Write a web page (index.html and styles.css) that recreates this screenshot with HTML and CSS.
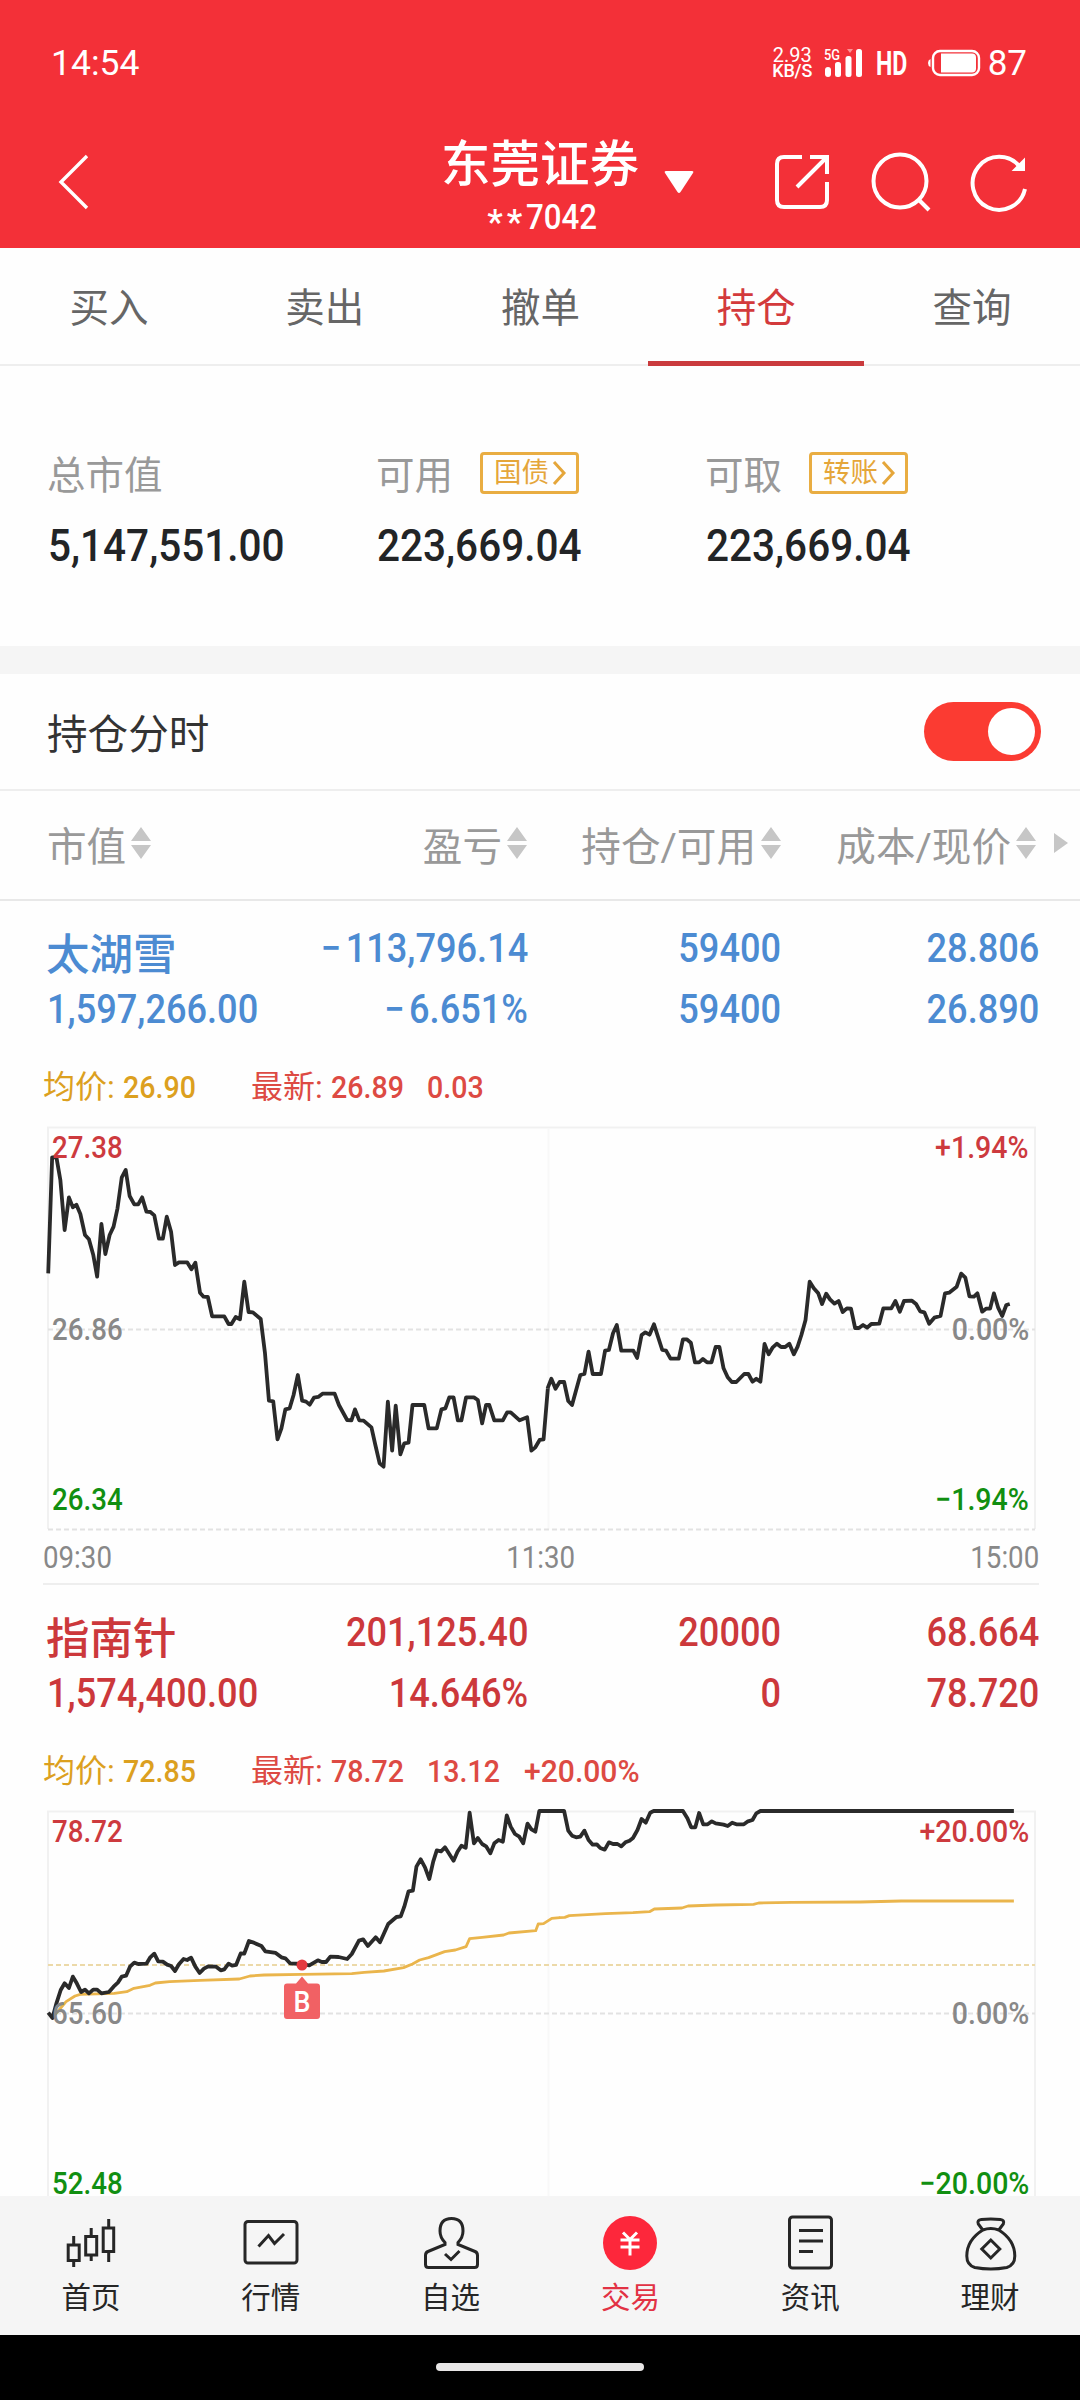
FILE: index.html
```html
<!DOCTYPE html>
<html lang="zh-CN">
<head>
<meta charset="utf-8">
<title>持仓</title>
<link rel="stylesheet" href="styles.css">
</head>
<body>
<div class="app">
  <header class="top">
    <div class="status">
      <span class="clock">14:54</span>
      <div class="speed"><span>2.93</span><span class="unit">KB/S</span></div>
      <svg class="signal" width="40" height="30" viewBox="0 0 40 30">
        <text x="0" y="11.5" font-size="14" font-weight="500" textLength="16" lengthAdjust="spacingAndGlyphs" fill="#fff">5G</text>
        <path d="M23 1h6l-3 4z" fill="#ff9296"/>
        <g fill="#fff"><rect x="1" y="19" width="6" height="10" rx="3"/><rect x="11" y="14" width="6" height="15" rx="2.5"/><rect x="21.500" y="8" width="6" height="21" rx="2.500"/><rect x="32" y="1" width="6" height="28" rx="2.500"/></g>
      </svg>
      <span class="hd"><span>HD</span></span>
      <svg class="battery" width="54" height="28" viewBox="0 0 54 28">
        <rect x="6" y="2" width="46" height="24" rx="7" fill="none" stroke="#fff" stroke-width="2.400"/>
        <path d="M14 4.500h31q4 0 4 4v11q0 4-4 4H14z" fill="#fff"/>
        <path d="M3.500 10v8Q1 17 1 14t2.500-4z" fill="#fff"/>
      </svg>
      <span class="level">87</span>
    </div>
    <div class="titlebar">
      <svg class="back" width="40" height="60" viewBox="0 0 40 60"><path d="M33 5 7 31 33 57" fill="none" stroke="#fff" stroke-width="3.400"/></svg>
      <div class="account">
        <div class="broker">东莞证券</div>
        <div class="acct-no"><span class="stars">**</span><span class="num">7042</span></div>
        <svg class="caret" width="32" height="24" viewBox="0 0 32 24"><path d="M3 1h26q2 0 1 2L17.500 22q-1.500 2-3 0L2 3Q1 1 3 1z" fill="#fff"/></svg>
      </div>
      <div class="actions">
        <svg width="60" height="60" viewBox="0 0 60 60" fill="none" stroke="#fff" stroke-width="4">
          <path d="M30 5H12Q5 5 5 12v36q0 7 7 7h36q7 0 7-7V30"/><path d="M38 5h17v17M54 6 25 35"/>
        </svg>
        <svg width="60" height="60" viewBox="0 0 60 60" fill="none" stroke="#fff" stroke-width="4">
          <circle cx="29" cy="29" r="26.500"/><path d="m47 47 11 11"/>
        </svg>
        <svg width="60" height="60" viewBox="0 0 60 60" fill="none" stroke="#fff" stroke-width="4">
          <path d="M55 37A26.500 26.500 0 1 1 50 15"/><path d="M54 8v10H44z" fill="#fff" stroke-width="2"/>
        </svg>
      </div>
    </div>
  </header>

  <nav class="tabs">
    <a>买入</a><a>卖出</a><a>撤单</a><a class="active">持仓</a><a>查询</a>
  </nav>

  <section class="summary">
    <div class="cell"><div class="label">总市值</div><div class="value"><span class="num">5,147,551.00</span></div></div>
    <div class="cell"><div class="label">可用<span class="tag">国债<svg width="15" height="26" viewBox="0 0 15 26"><path d="m2 2 10 11L2 24"/></svg></span></div><div class="value"><span class="num">223,669.04</span></div></div>
    <div class="cell"><div class="label">可取<span class="tag">转账<svg width="15" height="26" viewBox="0 0 15 26"><path d="m2 2 10 11L2 24"/></svg></span></div><div class="value"><span class="num">223,669.04</span></div></div>
  </section>

  <main class="holdings">
    <div class="switch-row"><span>持仓分时</span><span class="toggle"><i></i></span></div>
    <div class="thead">
      <span class="c1">市值<svg class="sort" viewBox="0 0 20 32"><path d="M10 0 20 14H0zM0 18h20L10 32z"/></svg></span>
      <span class="c2">盈亏<svg class="sort" viewBox="0 0 20 32"><path d="M10 0 20 14H0zM0 18h20L10 32z"/></svg></span>
      <span class="c3">持仓/可用<svg class="sort" viewBox="0 0 20 32"><path d="M10 0 20 14H0zM0 18h20L10 32z"/></svg></span>
      <span class="c4">成本/现价<svg class="sort" viewBox="0 0 20 32"><path d="M10 0 20 14H0zM0 18h20L10 32z"/></svg></span>
      <svg class="more" width="16" height="20" viewBox="0 0 16 20"><path d="m1 0 14 10L1 20z"/></svg>
    </div>

    <article class="stock">
      <div class="rows blue">
        <span class="name">太湖雪</span><span class="num neg">−113,796.14</span><span class="num">59400</span><span class="num">28.806</span>
        <span class="num left">1,597,266.00</span><span class="num neg">−6.651%</span><span class="num">59400</span><span class="num">26.890</span>
      </div>
      <div class="quote">
        <span class="avg">均价:<b class="num">26.90</b></span><span class="last">最新:<b class="num">26.89</b><b class="num">0.03</b></span>
      </div>
      <div class="chart">
        <svg width="1080" height="403" viewBox="0 0 1080 403">
          <path class="frame" d="M48 402V.5H1035V402"/><path class="frame noon" d="M548.500 1V402"/>
          <path class="dash" d="M48 202.500H1035M48 402.500H1035"/>
          <g class="price">
            <path transform="translate(0 -27) scale(.35714 .33333)" d="M135 520 146 172 158 172 169 240 181 390 193 292 204 322 214 314 225 342 238 405 249 418 261 464 272 530 284 372 295 462 307 405 318 380 329 325 341 232 352 210 363 288 376 313 387 313 398 292 410 335 421 336 432 346 445 416 456 416 467 350 479 395 490 495 501 487 524 487 536 508 547 488 560 578 570 590 582 591 594 649 628 649 640 672 648 672 660 651 672 658 684 545 696 636 708 637 730 657 742 760 753 902 765 904 777 1018 788 985 799 928 811 925 822 885 834 825 846 902 857 905 867 914 879 893 891 891 903 881 937 881 949 915 972 960 984 961 994 928 1006 961 1018 962 1040 982 1051 1035 1063 1090 1074 1100 1086 905 1098 1052 1108 917 1121 1063 1132 1030 1144 1028 1155 915 1188 915 1200 985 1223 985 1236 928 1247 925 1258 892 1270 892 1282 961 1292 961 1305 892 1327 892 1338 900 1350 970 1361 915 1370 915 1384 961 1408 961 1420 937 1430 937 1455 961 1476 952 1488 1052 1499 1042 1511 1020 1522 1018 1534 865"/>
            <path transform="translate(540 -27) scale(.34439 .33333)" d="M22 865 33 836 45 866 57 846 70 846 82 903 93 915 117 825 129 822 141 755 153 822 177 822 189 752 200 750 212 700 223 675 236 752 271 752 282 774 295 705 306 697 318 704 331 673 355 750 366 752 379 776 403 776 415 718 426 718 438 728 450 787 462 787 473 777 485 787 498 787 510 741 521 741 533 805 545 832 557 846 570 846 593 822 605 822 617 845 628 836 640 845 652 732 664 763 676 742 688 731 700 741 712 741 724 731 737 763 748 740 759 705 771 660 783 545 795 565 808 580 819 612 831 581 842 598 855 611 867 603 879 636 891 625 903 626 915 684 926 684 938 675 950 683 962 672 985 671 997 625 1020 625 1032 603 1045 635 1057 603 1080 602 1092 612 1104 634 1116 637 1130 671 1145 653 1163 648 1176 580 1188 578 1210 560 1223 521 1235 533 1247 589 1260 590 1270 580 1284 635 1295 626 1307 626 1318 580 1330 622 1342 648 1354 615 1364 612"/>
          </g>
        </svg>
        <div class="scale">
          <div class="red"><span class="num left">27.38</span><span class="num">+1.94%</span></div>
          <div class="gray"><span class="num left">26.86</span><span class="num">0.00%</span></div>
          <div class="green"><span class="num left">26.34</span><span class="num">−1.94%</span></div>
        </div>
      </div>
      <div class="times"><span class="num left">09:30</span><span class="num mid">11:30</span><span class="num">15:00</span></div>
    </article>

    <article class="stock">
      <div class="rows crimson">
        <span class="name">指南针</span><span class="num">201,125.40</span><span class="num">20000</span><span class="num">68.664</span>
        <span class="num left">1,574,400.00</span><span class="num">14.646%</span><span class="num">0</span><span class="num">78.720</span>
      </div>
      <div class="quote">
        <span class="avg">均价:<b class="num">72.85</b></span><span class="last">最新:<b class="num">78.72</b><b class="num">13.12</b><b class="num pct">+20.00%</b></span>
      </div>
      <div class="chart">
        <svg width="1080" height="403" viewBox="0 0 1080 403">
          <path class="frame" d="M48 402V.5H1035V402"/><path class="frame noon" d="M548.500 1V402"/>
          <path class="dash" d="M48 202.500H1035M48 402.500H1035"/>
          <path class="dash cost" d="M48 154H1035"/>
          <g class="average">
            <path transform="translate(0 -31) scale(.35714 .33333)" d="M147 712 165 690 185 665 210 648 225 643 320 640 355 635 375 625 420 616 435 609 475 605 560 601 670 597 700 588 740 585 846 583 985 581 1020 577 1075 573 1130 563 1155 552 1175 540 1200 533 1245 515 1275 510 1305 500 1315 476 1350 472 1410 465 1425 459 1500 452 1507 432 1522 431 1545 415 1568 413"/>
            <path transform="translate(540 -31) scale(.34439 .33333)" d="M56 413 72 412 85 407 190 401 270 398 318 395 332 387 412 384 430 378 510 375 620 373 635 369 730 367 930 366 1050 363 1376 363"/>
          </g>
          <g class="price">
            <path transform="translate(0 -31) scale(.35714 .33333)" d="M135 698 147 714 158 670 170 630 181 610 193 624 204 590 215 610 227 636 238 629 249 640 261 629 272 629 284 640 305 636 318 620 330 608 341 590 353 587 364 560 376 548 387 552 410 551 420 533 432 521 443 544 456 545 468 554 479 558 490 573 501 553 514 537 524 540 535 533 547 560 559 579 571 566 583 559 605 560 618 571 628 568 640 551 650 557 661 555 674 520 684 521 697 483 708 487 732 498 743 514 772 519 788 532 799 535 812 550 846 552 866 556 890 541 901 546 913 546 925 530 948 531 972 537 985 522 1005 482 1017 478 1030 498 1052 472 1064 487 1087 432 1110 411 1122 409 1132 380 1144 334 1156 332 1166 260 1178 238 1190 262 1202 297 1213 245 1223 211 1235 214 1246 202 1270 242 1281 215 1292 197 1304 203 1315 98 1327 190 1338 174 1350 192 1361 199 1373 220 1384 190 1396 180 1408 185 1419 106 1430 140 1442 162 1454 170 1465 190 1477 131 1488 148 1499 155 1510 93 1568 93"/>
            <path transform="translate(540 -31) scale(.34439 .33333)" d="M50 93 70 93 82 152 93 167 105 172 117 170 129 152 141 180 153 194 165 193 175 204 188 209 200 187 212 192 225 192 236 199 248 187 260 182 270 174 283 150 295 117 307 128 320 98 330 93 415 93 428 115 439 142 451 142 462 99 474 133 487 133 499 124 510 130 533 134 545 138 558 128 570 133 592 133 604 124 617 120 628 100 640 93 1376 93"/>
          </g>
          <circle cx="302" cy="154" r="5.500" fill="#e43a40"/>
          <path d="m302 165.500 6 7h9q3 0 3 3V205q0 3-3 3h-30q-3 0-3-3v-29.500q0-3 3-3h9z" fill="#f16164"/>
          <text x="302" y="201" font-size="30" font-weight="500" text-anchor="middle" textLength="17" lengthAdjust="spacingAndGlyphs" fill="#fff">B</text>
        </svg>
        <div class="scale">
          <div class="red"><span class="num left">78.72</span><span class="num">+20.00%</span></div>
          <div class="gray"><span class="num left">65.60</span><span class="num">0.00%</span></div>
          <div class="green"><span class="num left">52.48</span><span class="num">−20.00%</span></div>
        </div>
      </div>
    </article>
  </main>

  <nav class="bottom">
    <a><svg viewBox="0 0 60 60"><g transform="translate(-4.800 1)"><path d="M17.500 18v9M17.500 43v6M35 10v8M35 38v5M52.500 1v8M52.500 34v10"/><rect x="12" y="27" width="11" height="15.500"/><rect x="29.500" y="18.500" width="11" height="18.500"/><rect x="47" y="10" width="10.500" height="23.500"/></g></svg>首页</a>
    <a><svg viewBox="0 0 60 60"><rect x="4" y="4.500" width="52" height="41.500" rx="3"/><path d="m17.500 29.500 10-11 6 8L43 17"/></svg>行情</a>
    <a><svg viewBox="0 0 60 60"><path d="M24 25.500Q19 20.500 19 14 19 1.500 30.500 1.500T42 14q0 6.500-5 11.500v2l17 7q2.500 1 2.500 4v9q0 3-3 3h-46q-3 0-3-3v-9q0-3 2.500-4l17-7z"/><path d="m24 37 6 5.500L38.500 34"/></svg>自选</a>
    <a class="active"><svg viewBox="0 0 60 60"><circle cx="30" cy="26" r="27" fill="#fd273b" stroke="none"/><path d="m23 15.500 7 7 7-7M20.500 23h19M20.500 30h19M30 21.500v17" stroke="#fff"/></svg>交易</a>
    <a><svg viewBox="0 0 60 60"><rect x="9.500" y="0" width="42" height="51" rx="3"/><path d="M19 13.500h24M19 24h24M19 34.500h14"/></svg>资讯</a>
    <a><svg viewBox="0 0 60 60"><g transform="translate(.800 1)"><path d="M22 12 17.500 6q-1.500-4 3-4.500Q30 .5 39.500 1.500q4.500.5 3 4.500L38 12"/><path d="M22 12q8-3 16 0 16 10 16 26 0 9-8 11.500-8 1.500-16 1.500t-16-1.500Q6 47 6 38q0-16 16-26z"/><path d="m30 22 9 9-9 9-9-9z"/></g></svg>理财</a>
  </nav>
  <div class="home"><i></i></div>
</div>
</body>
</html>
```
FILE: styles.css
```css
* { box-sizing: border-box; }
body { margin: 0; font-family: Roboto, "Noto Sans CJK SC", sans-serif; background: #fff; }
svg { display: block; flex: none; overflow: visible; }
i { font-style: normal; display: block; }

.app { width: 1080px; height: 2400px; display: flex; flex-direction: column; overflow: hidden; background: #fefefe; }
.num { display: inline-block; font-weight: 500; white-space: nowrap; transform: scaleX(.893); transform-origin: right center; }
.num.left { transform-origin: left center; }
.num.mid { transform-origin: center; }
.num.neg::first-letter { letter-spacing: 5px; }

/* header */
.top { height: 248px; flex: none; background: #f33038; color: #fff; }
.status { height: 126px; padding: 0 53px 0 51px; display: flex; align-items: center; }
.clock { font-size: 35.500px; margin-right: auto; }
.speed { width: 41px; margin-right: 11px; font-size: 20px; line-height: 15px; display: flex; flex-direction: column; align-items: center; }
.unit { font-size: 18px; font-weight: 500; letter-spacing: -.2px; }
.signal { margin-right: 12px; }
.hd { width: 34px; margin-right: 17px; font-size: 34px; font-weight: 700; }
.hd span { display: inline-block; transform: scaleX(.68); transform-origin: left; }
.battery { margin-right: 7px; }
.level { font-size: 35px; }
.titlebar { height: 126px; margin-top: -4px; padding: 0 50px 28px 54px; display: grid; grid-template-columns: 1fr auto 1fr; align-items: center; }
.back { width: 40px; }
.account { position: relative; width: 200px; text-align: center; padding-top: 12px; }
.broker { font-size: 49.500px; font-weight: 500; line-height: 62px; white-space: nowrap; margin-left: -4px; }
.acct-no { font-size: 35px; line-height: 44px; white-space: nowrap; display: flex; justify-content: center; }
.acct-no .num { transform-origin: left; margin-right: -9px; }
.stars { font-weight: 500; letter-spacing: 4px; transform: translateY(5px); }
.caret { position: absolute; left: 221px; top: 48px; }
.actions { display: flex; justify-content: flex-end; gap: 39px; padding-top: 1px; }

/* tabs */
.tabs { height: 118px; flex: none; display: flex; border-bottom: 2px solid #eee; padding-left: 1px; }
.tabs a { flex: 1; text-align: center; font-size: 39.500px; line-height: 121px; color: #666; height: 118px; }
.tabs .active { color: #d33a3c; border-bottom: 5px solid #ca3b3d; }

/* account summary */
.summary { height: 308px; flex: none; padding: 80px 0 0 48px; display: grid; grid-template-columns: 329px 329px 1fr; border-bottom: 28px solid #f5f5f5; }
.label { display: flex; align-items: center; height: 52px; font-size: 38.500px; color: #999; margin-left: -1px; }
.tag { display: flex; align-items: center; gap: 3px; margin-left: 27px; width: 99px; height: 42px; margin-top: 1px; padding-left: 11px; border: 3px solid #e9ad42; border-radius: 4px; font-size: 27.500px; line-height: 36px; color: #e5a63a; }
.tag svg { fill: none; stroke: #e5a63a; stroke-width: 3; }
.value { font-size: 45px; line-height: 60px; margin-top: 18px; color: #222426; }
.value .num { transform-origin: left center; transform: scaleX(.9); }

/* holdings */
.holdings { flex: 1; min-height: 0; overflow: hidden; }
.switch-row { height: 117px; padding: 0 39px 0 47px; display: flex; align-items: center; justify-content: space-between; border-bottom: 2px solid #eee; font-size: 40.600px; color: #333; }
.toggle { width: 117px; height: 59px; border-radius: 30px; background: #fb3b32; display: flex; justify-content: flex-end; align-items: center; padding-right: 6px; }
.toggle i { width: 47px; height: 47px; border-radius: 50%; background: #fff; }
.thead { height: 110px; padding: 0 11px 4px 47px; display: grid; grid-template-columns: 228px 252px 254px 255px 1fr; align-items: center; border-bottom: 2px solid #e8e8e8; font-size: 39.600px; color: #999; }
.thead span { display: flex; align-items: center; justify-content: flex-end; gap: 5px; white-space: nowrap; }
.thead .c1 { justify-content: flex-start; }
.sort { width: 20px; height: 32px; fill: #c6c6c6; }
.more { justify-self: end; fill: #c6c6c6; }

.rows { height: 145px; padding: 16px 41px 0 48px; display: grid; grid-template-columns: 228px 252px 253px 258px; grid-template-rows: 61px 61px; align-items: center; justify-items: end; font-size: 40.500px; }
.rows .left, .rows .name { justify-self: start; }
.rows .left { margin-left: -1px; }
.name { font-size: 43.500px; font-weight: 500; padding-top: 8px; margin-left: -2px; }
.blue { color: #4c8bd2; }
.crimson { color: #cc383b; }
.quote { height: 81px; padding: 17px 43px 0; display: flex; font-size: 32px; line-height: 48px; }
.quote .num { transform-origin: left; margin-left: 8px; }
.quote .num + .num { margin-left: 15px; }
.quote .pct { transform: scaleX(.94); }
.avg { width: 208px; color: #dca01f; }
.last { color: #dd4a43; }
.chart { position: relative; height: 403px; }
.frame { fill: none; stroke: #f1f1f1; stroke-width: 2; }
.noon { stroke: #f8f8f8; }
.dash { fill: none; stroke: #e2e2e2; stroke-width: 2; stroke-dasharray: 5 3; }
.cost { stroke: #ecd9a8; }
.price path, .average path { fill: none; stroke: #2a2a2a; stroke-width: 3.800; stroke-linejoin: round; vector-effect: non-scaling-stroke; }
.average path { stroke: #eab54c; stroke-width: 2.800; }
/* axis labels lie over the plot */
.scale { position: absolute; inset: 0 51px 0 52px; display: flex; flex-direction: column; justify-content: space-between; font-size: 31px; line-height: 40px; padding: 1px 0 10px; }
.scale div { display: flex; justify-content: space-between; }
.scale .num + .num { transform: scaleX(.92); }
.gray { color: #888; padding-top: 11px; }
.red { color: #cd3a3e; }
.green { color: #118f11; }
.times { height: 55px; margin: 0 41px 0 43px; padding-top: 2px; display: flex; justify-content: space-between; align-items: center; font-size: 31px; color: #888; border-bottom: 2px solid #eee; }
.times .num { font-weight: 400; }

/* bottom navigation */
.bottom { height: 139px; flex: none; display: flex; background: #f5f5f5; padding-left: 1px; }
.bottom a { flex: 1; display: flex; flex-direction: column; align-items: center; font-size: 29.500px; line-height: 40px; color: #262626; padding-top: 21px; }
.bottom svg { width: 60px; height: 60px; margin-bottom: 1px; fill: none; stroke: #262626; stroke-width: 3; }
.bottom .active { color: #e23244; }
.home { height: 65px; flex: none; background: #000; display: flex; justify-content: center; padding-top: 28px; }
.home i { width: 208px; height: 8px; border-radius: 4px; background: #e9e7e7; }
```
